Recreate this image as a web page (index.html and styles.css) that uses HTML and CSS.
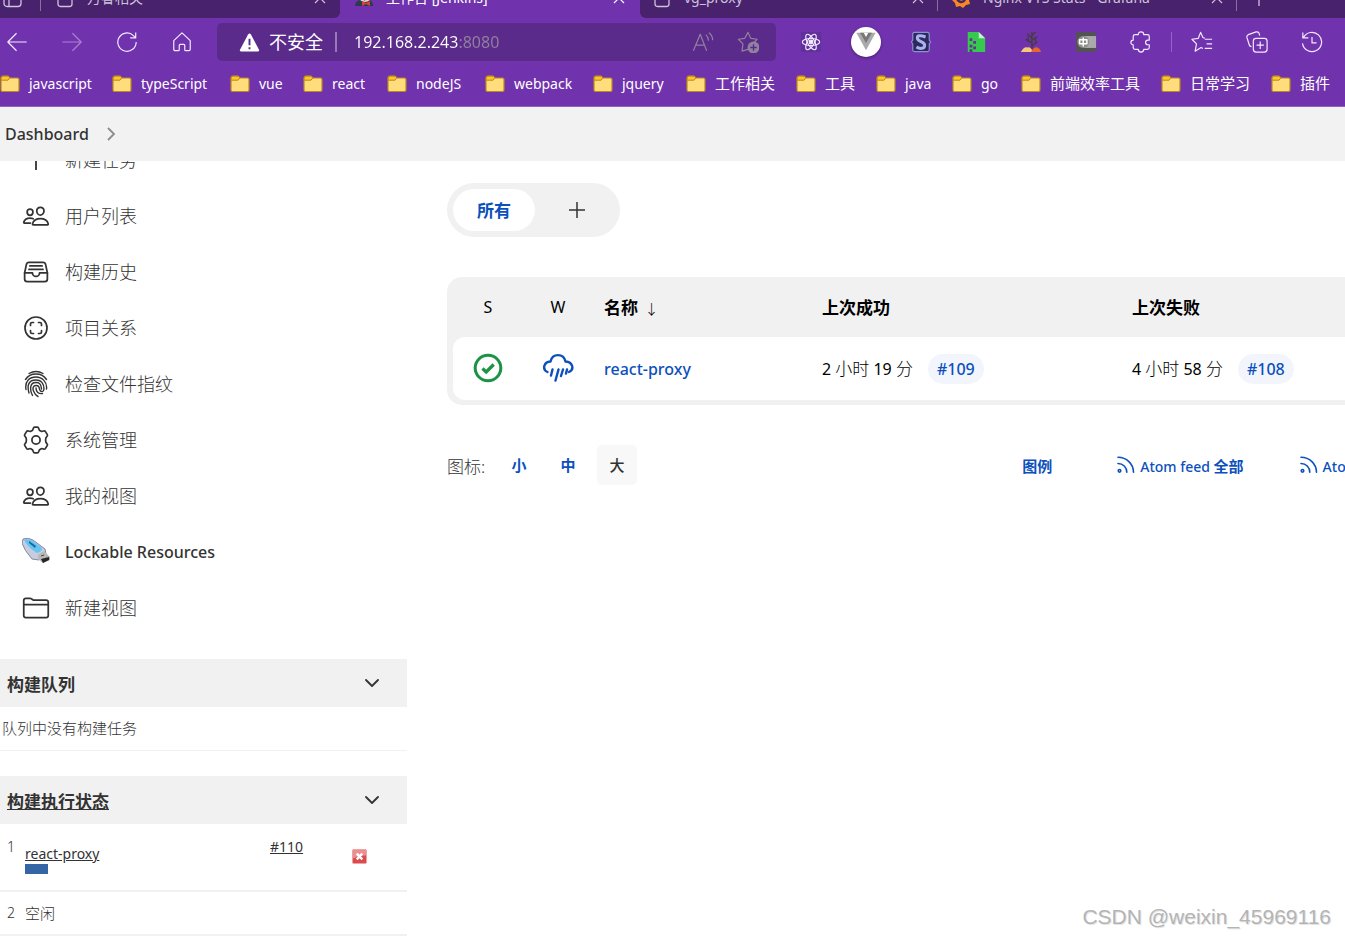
FILE: index.html
```html
<!DOCTYPE html>
<html lang="zh-CN">
<head>
<meta charset="utf-8">
<meta name="viewport" content="width=device-width, initial-scale=1">
<title>工作台 [Jenkins]</title>
<link rel="stylesheet" href="styles.css">
</head>
<body>
<svg class="sprite" aria-hidden="true">
  <symbol id="folder" viewBox="0 0 20 18">
    <path d="M1 3.500Q1 1 3 1h5l2 2h7.500q1.500 0 1.500 1.500V15q0 1.500-1.500 1.500h-15Q1 16.500 1 15z" fill="#ffdc7c" stroke="#b98a1c" stroke-width="1.200"/>
    <path d="M1.200 3.500Q1.200 1.200 3 1.200h5l1.800 1.800L8 5.200H1.200z" fill="#fdc52b" stroke="#b98a1c"/>
  </symbol>
  <symbol id="close" viewBox="0 0 12 12"><path d="M1 1l10 10M11 1L1 11" fill="none" stroke="currentColor" stroke-width="1.200"/></symbol>
  <symbol id="page" viewBox="0 0 18 20"><path d="M2 1.500h9l5 5V16q0 2.500-2.500 2.500h-9Q2 18.500 2 16z" fill="none" stroke="currentColor" stroke-width="1.300"/></symbol>
  <symbol id="people" viewBox="0 0 512 512">
    <g fill="none" stroke="currentColor" stroke-width="32" stroke-linejoin="round" stroke-linecap="round">
      <path d="M402 168c-2.930 40.670-33.100 72-66 72s-63.120-31.320-66-72c-3-42.310 26.370-72 66-72s69 30.460 66 72z"/>
      <path d="M336 304c-65.170 0-127.840 32.370-143.540 95.410-2.080 8.340 3.150 16.590 11.720 16.590h263.650c8.570 0 13.770-8.250 11.720-16.590C463.850 335.360 401.180 304 336 304z"/>
      <path d="M200 185.940c-2.340 32.480-26.720 58.060-53 58.060s-50.700-25.570-53-58.060C91.610 152.150 115.340 128 147 128s55.390 24.770 53 57.940z"/>
      <path d="M206 306c-18.050-8.270-37.930-11.450-59-11.450-52 0-102.100 25.850-114.650 76.200-1.650 6.660 2.530 13.250 9.370 13.250H154"/>
    </g>
  </symbol>
  <symbol id="chevron" viewBox="0 0 14 14"><path d="M1 4l6 6 6-6" fill="none" stroke="currentColor" stroke-width="1.800" stroke-linecap="round" stroke-linejoin="round"/></symbol>
  <symbol id="rss" viewBox="0 0 18 18"><g fill="none" stroke="currentColor" stroke-width="1.600" stroke-linecap="round"><circle cx="2.500" cy="14.800" r="1.300"/><path d="M1 7.500c5 0 8.800 3.800 8.800 8.800M1 1.300c8.500 0 15.500 6.500 15.500 15"/></g></symbol>
</svg>

<header class="browser">
  <div class="tabs">
    <div class="tab tab-first">
      <svg class="tab-icon" viewBox="0 0 20 20"><g fill="none" stroke="currentColor" stroke-width="1.300"><rect x="2" y="1.500" width="17" height="17" rx="3"/><path d="M7 6v12.500M2 6h17"/></g></svg>
      <span class="tab-rule"></span>
      <svg class="tab-icon"><use href="#page"/></svg>
      <span class="tab-title">万睿相关</span>
      <button class="tab-close" aria-label="关闭"><svg><use href="#close"/></svg></button>
    </div>
    <div class="tab tab-active">
      <svg class="tab-icon" viewBox="0 0 20 20"><path d="M1 18c0-4 3-6 6-6h7c3 0 5 2 5 6z" fill="#2d3b52"/><circle cx="11" cy="7" r="7" fill="#ead5c4"/><path d="M4 9Q3 0 11 0t7 6q-5-2-9-1l-2 5z" fill="#312b2b"/><path d="M8 13l4 2 4-2v5l-4-2-4 2z" fill="#dc4136"/><path d="M8 11q3 2 5 0" fill="none" stroke="#50382f"/></svg>
      <span class="tab-title">工作台 [Jenkins]</span>
      <button class="tab-close" aria-label="关闭"><svg><use href="#close"/></svg></button>
    </div>
    <div class="tab tab-third">
      <svg class="tab-icon"><use href="#page"/></svg>
      <span class="tab-title">vg_proxy</span>
      <button class="tab-close" aria-label="关闭"><svg><use href="#close"/></svg></button>
      <span class="tab-rule"></span>
    </div>
    <div class="tab tab-fourth">
      <svg class="tab-icon" viewBox="0 0 20 20"><path d="M10 0l3 2 4-1 0 4 3 3-2 4 1 4-4 1-3 3-3-2-4 1-1-4-3-3 2-4-1-4 4-1z" fill="#f58a21"/><path d="M14 11a4 4 0 1 1-3-5" fill="none" stroke="#48226c" stroke-width="2.500"/></svg>
      <span class="tab-title">Nginx VTS Stats - Grafana</span>
      <button class="tab-close" aria-label="关闭"><svg><use href="#close"/></svg></button>
      <span class="tab-rule"></span>
    </div>
    <button class="tab-new" aria-label="新建标签页"><svg viewBox="0 0 16 16"><path d="M8 0v16M0 8h16" stroke="currentColor" stroke-width="1.300"/></svg></button>
  </div>

  <div class="toolbar">
    <div class="tools">
      <button class="tool" aria-label="后退"><svg viewBox="0 0 24 24"><path d="M22.500 12H2M11.500 2.500L2 12l9.500 9.500"/></svg></button>
      <button class="tool tool-dim" aria-label="前进"><svg viewBox="0 0 24 24"><path d="M1.500 12H22M12.500 2.500L22 12l-9.500 9.500"/></svg></button>
      <button class="tool" aria-label="刷新"><svg viewBox="0 0 24 24"><path d="M22 12A10 10 0 1 1 19 5l2.500 2.500M21.500 1.500v6h-6"/></svg></button>
      <button class="tool" aria-label="主页"><svg viewBox="0 0 24 24"><path d="M3 10.500L12 2l9 8.500v9.500q0 1.500-1.500 1.500h-3.500q-1 0-1-1v-5q0-1-1-1h-4q-1 0-1 1v5q0 1-1 1H4.500q-1.500 0-1.500-1.500z"/></svg></button>
    </div>
    <div class="address">
      <svg class="warning" viewBox="0 0 22 20"><path d="M9.500 1.500q1.500-2 3 0l8.500 16q.5 2-1.500 2h-17q-2 0-1.500-2z" fill="#fff"/><path d="M11 6v7M11 15v2" stroke="#5a2b8a" stroke-width="2"/></svg>
      <label class="address-label" for="url">不安全</label>
      <span class="address-rule"></span>
      <input class="url" id="url" type="text" value="192.168.2.243:8080">
      <button class="tool tool-grey" aria-label="朗读"><svg viewBox="0 0 24 24"><path d="M1.500 21.500L9 3.500l7 18M4 15.500h9.500M15 4q3 2.500 3 6.500M18.500 2q4 3 4 8"/></svg></button>
      <button class="tool tool-grey" aria-label="收藏"><svg viewBox="0 0 24 24"><path d="M12 20l-6.500 2 1-8L1.500 9l7-1L12 1.500l3 6.500 7 1-3 3"/><circle cx="18" cy="18" r="6.500" fill="#92809f" stroke="none"/><path d="M18 14.500v7M14.500 18h7" stroke="#5a2b8a" stroke-width="1.500"/></svg></button>
    </div>
    <div class="tools">
      <button class="tool" aria-label="React"><svg viewBox="0 0 24 24"><rect width="22" height="22" x="1" y="1" fill="#61309b" stroke="none"/><circle cx="12" cy="12" r="2" fill="currentColor"/><ellipse cx="12" cy="12" rx="9.500" ry="3.800"/><ellipse cx="12" cy="12" rx="9.500" ry="3.800" transform="rotate(60 12 12)"/><ellipse cx="12" cy="12" rx="9.500" ry="3.800" transform="rotate(120 12 12)"/></svg></button>
      <button class="tool tool-vue" aria-label="Vue"><svg viewBox="0 0 24 24"><path d="M1.500 2h21L12 21z" fill="#aaa" stroke="none"/><path d="M5.500 2h13L12 13z" fill="#777" stroke="none"/><path d="M9.500 2h5L12 6.500z" fill="#fff" stroke="none"/></svg></button>
      <button class="tool" aria-label="Stylus"><svg viewBox="0 0 24 24"><path d="M5 1.500h14q2 0 2 2v6.500l1.500 2-1.500 2v6.500q0 2-2 2H5q-2 0-2-2V14l-1.500-2L3 10V3.500q0-2 2-2z" fill="#30275f" stroke="#8c91d4"/><path d="M17 6.500q-9-3-9 1C8 12 16 11 16 15.500S10 19.500 7 17.500" stroke="#a8b4ed" stroke-width="3.300"/></svg></button>
      <button class="tool" aria-label="压缩文件"><svg viewBox="0 0 24 24"><path d="M3 1h12l7 7v15H3z" fill="#37c84f" stroke="none"/><path d="M15 1l7 7h-7z" fill="#c9f0d0" stroke="none"/><path d="M5 8h3v3H5zM9 11h3v3H9zM5 15h3v3H5zM9 17h3v3H9zM5 20h3v3H5z" fill="#65318f" stroke="none"/></svg></button>
      <button class="tool" aria-label="植物"><svg viewBox="0 0 24 24"><path d="M13 19V1M13 16l6-4M13 13L6 9M13 10l6-4M13 8L8 3M9 11V6M17 13V8M13 5l4-4" stroke="#473b45" stroke-width="1.600"/><path d="M1 23q3-6 7-5 4-1 6 5z" fill="#f6c87c" stroke="none"/><path d="M12 23q3-6 7-5 3 1 4 5z" fill="#eb6726" stroke="none"/></svg></button>
      <button class="tool" aria-label="翻译"><svg viewBox="0 0 24 24"><rect x="1" y="1" width="22" height="22" rx="3" fill="#535353" stroke="none"/><path d="M9 5.500h14v13H9z" fill="#aaa" stroke="none"/><circle cx="9" cy="12" r="6.500" fill="#8e8e8e" stroke="none"/><path d="M5 9.500h8v4.500H5zM9 7v10" stroke="#fff" stroke-width="1.600"/></svg></button>
      <button class="tool" aria-label="扩展"><svg viewBox="0 0 24 24"><path d="M5.500 4h3.500q0-3 3-3t3 3h4q2 0 2 2v4h-1.500q-2.500 0-2.500 2.500t2.500 2.500h1.500v3q0 2-2 2h-4q0 3-3 3t-3-3H5.500q-2 0-2-2v-3q-2.500 0-2.500-2.500T3.500 10V6q0-2 2-2z"/></svg></button>
    </div>
    <span class="toolbar-rule"></span>
    <div class="tools">
      <button class="tool" aria-label="收藏夹"><svg viewBox="0 0 24 24"><path d="M15 9h8M17 14h6M15 19h8M15 8l-2-1L10.500 1.500 8 8l-7 1 5 5-1.500 8L11 18l2 1"/></svg></button>
      <button class="tool" aria-label="集锦"><svg viewBox="0 0 24 24"><rect x="8" y="8" width="15" height="15" rx="3"/><path d="M15.500 11.500v8M11.500 15.500h8M6 17q-2 0-2.500-2L1 7q-.5-2 1.500-3L11 1q2-.5 3 1l1 3"/></svg></button>
      <button class="tool" aria-label="历史记录"><svg viewBox="0 0 24 24"><path d="M2 1.500v6h6M2.500 7.500a10.500 10.500 0 1 1-.9 6M12 6.500v6.500h5"/></svg></button>
    </div>
  </div>

  <nav class="bookmarks">
    <a href="#"><svg><use href="#folder"/></svg>javascript</a>
    <a href="#"><svg><use href="#folder"/></svg>typeScript</a>
    <a href="#"><svg><use href="#folder"/></svg>vue</a>
    <a href="#"><svg><use href="#folder"/></svg>react</a>
    <a href="#"><svg><use href="#folder"/></svg>nodeJS</a>
    <a href="#"><svg><use href="#folder"/></svg>webpack</a>
    <a href="#"><svg><use href="#folder"/></svg>jquery</a>
    <a href="#"><svg><use href="#folder"/></svg><span class="zh">工作相关</span></a>
    <a href="#"><svg><use href="#folder"/></svg><span class="zh">工具</span></a>
    <a href="#"><svg><use href="#folder"/></svg>java</a>
    <a href="#"><svg><use href="#folder"/></svg>go</a>
    <a href="#"><svg><use href="#folder"/></svg><span class="zh">前端效率工具</span></a>
    <a href="#"><svg><use href="#folder"/></svg><span class="zh">日常学习</span></a>
    <a href="#"><svg><use href="#folder"/></svg><span class="zh">插件</span></a>
  </nav>
</header>

<nav class="breadcrumb">
  <a href="#">Dashboard</a>
  <svg viewBox="0 0 14 14"><path d="M4 1l6 6-6 6" fill="none" stroke="#8c8c8c" stroke-width="1.800"/></svg>
</nav>

<div class="page">
  <aside class="side">
    <nav class="tasks">
      <a href="#"><svg viewBox="0 0 28 28"><path d="M14 4v20M4 14h20" stroke="currentColor" stroke-width="1.800"/></svg><span>新建任务</span></a>
      <a href="#"><svg><use href="#people"/></svg><span>用户列表</span></a>
      <a href="#"><svg viewBox="0 0 512 512"><g fill="none" stroke="currentColor" stroke-width="32" stroke-linecap="round" stroke-linejoin="round"><path d="M384 80H128c-26 0-43 14-48 40L48 272v112a48 48 0 0048 48h320a48 48 0 0048-48V272l-32-152c-5-27-23-40-48-40z"/><path d="M48 272h144M320 272h144M192 272a64 64 0 00128 0M144 144h224M128 208h256"/></g></svg><span>构建历史</span></a>
      <a href="#"><svg viewBox="0 0 28 28"><g fill="none" stroke="currentColor" stroke-width="1.700" stroke-linecap="round" stroke-linejoin="round"><circle cx="14" cy="14" r="11"/><path d="M8.500 11.500V10q0-1.500 1.500-1.500h1.500M16.500 8.500H18q1.500 0 1.500 1.500v1.500M19.500 16.500V18q0 1.500-1.500 1.500h-1.500M11.500 19.500H10q-1.500 0-1.500-1.500v-1.500"/></g></svg><span>项目关系</span></a>
      <a href="#"><svg viewBox="0 0 28 28"><g fill="none" stroke="currentColor" stroke-width="1.400" stroke-linecap="round"><path d="M7 3.500Q14-.5 21 3.500M3.500 9.500Q7 4 14 4t10.500 5.500M4 19.500C2.500 11 8 7 14 7s11.500 5 10.500 12M7 23C5 16 6 10 14 10c6 0 8.500 5 7.800 10-.3 2-3.300 2-4 0-.7-3-.8-4.500-3.800-4.500s-3.500 3-2.500 5.500q1.500 4 4.500 5.500M10.500 25.500C8 21 7 12.500 14 12.500c5.500 0 5 4 5.500 6.500M14 18c0 4 2.500 6 6.500 5.500"/></g></svg><span>检查文件指纹</span></a>
      <a href="#"><svg viewBox="0 0 24 24"><g fill="none" stroke="currentColor" stroke-width="1.500" stroke-linejoin="round"><path d="M9.700 2q.2-1 1.200-1h2.200q1 0 1.200 1 .3 2 2 2.400 .8.500 2.200-.1 1-.4 1.600.5l1.500 2.400q.6 1-.2 1.700-1.200 1-1.200 3.100t1.200 3.100q.8.700.2 1.700l-1.500 2.400q-.6.900-1.600.5-1.400-.6-2.200-.1-1.700.5-2 2.400-.2 1-1.200 1h-2.200q-1 0-1.200-1-.3-1.900-2-2.400-.8-.5-2.200.1-1 .4-1.600-.5l-1.500-2.400q-.6-1 .2-1.700 1.200-1 1.200-3.100T2.600 8.900q-.8-.7-.2-1.700l1.500-2.400q.6-.9 1.600-.5 1.400.6 2.200.1 1.700-.4 2-2.400z"/><circle cx="12" cy="12" r="3.500"/></g></svg><span>系统管理</span></a>
      <a href="#"><svg><use href="#people"/></svg><span>我的视图</span></a>
      <a href="#" class="latin"><svg viewBox="0 0 28 28"><path d="M1 1q5-2 10 1l12 9 1 5-7 6-7-1Q2 12 0 5z" fill="#c9ccda" stroke="#8588a8"/><path d="M2 1.500q5-1 9 1.500l9 7q0 4-5 5Q5 9 2 1.500z" fill="#64c4f4"/><path d="M7 3l7 5-1 2-6-5z" fill="#17699c"/><path d="M16 17l6-4 6 6v3l-7 3-5-4z" fill="#b8b8b8"/><path d="M19 21l8-2v3l-6 3z" fill="#252525"/><path d="M19 18l3-1" stroke="#444"/></svg>Lockable Resources</a>
      <a href="#"><svg viewBox="0 0 512 512"><path d="M440 432H72a40 40 0 01-40-40V120a40 40 0 0140-40h76a40 40 0 0122 7l28 18a40 40 0 0022 7h220a40 40 0 0140 40v240a40 40 0 01-40 40zM32 192h448" fill="none" stroke="currentColor" stroke-width="32" stroke-linejoin="round"/></svg><span>新建视图</span></a>
    </nav>

    <section class="pane">
      <h2 class="pane-head"><span>构建队列</span><button aria-label="折叠"><svg><use href="#chevron"/></svg></button></h2>
      <p class="queue-empty">队列中没有构建任务</p>
    </section>

    <section class="pane">
      <h2 class="pane-head"><a href="#">构建执行状态</a><button aria-label="折叠"><svg><use href="#chevron"/></svg></button></h2>
      <table class="executors">
        <tr class="busy">
          <td class="num">1</td>
          <td class="job"><a href="#">react-proxy</a><div class="progress"><div class="progress-done" style="width:24%"></div></div></td>
          <td class="build"><a href="#">#110</a></td>
          <td class="stop"><button aria-label="终止"><svg viewBox="0 0 16 16"><rect x=".5" y=".5" width="15" height="15" rx="1.500" fill="#db4b4e" stroke="#efa2a2"/><path d="M1 1h14v6Q8 6 1 10z" fill="#ec8f90"/><path d="M5 5l6 6M11 5l-6 6" stroke="#fff" stroke-width="2.500"/></svg></button></td>
        </tr>
        <tr class="idle">
          <td class="num">2</td>
          <td class="job" colspan="3">空闲</td>
        </tr>
      </table>
    </section>
  </aside>

  <main class="main">
    <div class="views">
      <a class="view view-active" href="#">所有</a>
      <a class="view view-add" href="#" aria-label="新建视图"><svg viewBox="0 0 16 16"><path d="M8 0v16M0 8h16" stroke="currentColor" stroke-width="1.500"/></svg></a>
    </div>

    <div class="jobs-wrap">
      <table class="jobs">
        <thead>
          <tr><th class="c-icon">S</th><th class="c-icon">W</th><th class="c-name">名称 <span class="sort">↓</span></th><th class="c-time">上次成功</th><th>上次失败</th></tr>
        </thead>
        <tbody>
          <tr>
            <td class="c-icon"><svg viewBox="0 0 32 32"><g fill="none" stroke="#1b9345"><circle cx="16" cy="16" r="12.800" stroke-width="3"/><path d="M10.500 16.500l3.700 3.500 7.500-7.500" stroke-width="3.300"/></g></svg></td>
            <td class="c-icon"><svg viewBox="0 0 32 32"><g fill="none" stroke="#0b50bd" stroke-width="2.400" stroke-linecap="round" stroke-linejoin="round"><path d="M5.500 20C0 17.500 1.500 10 8.500 9.500 10.500 1 21.500 1 23.500 9.500c7.500.5 9 8 3.500 10.500M10.500 17.500l-1.500 6M16.500 17.500l-3 11M21 17.500l-2 6.500M25 17.500l-1 4"/></g></svg></td>
            <td class="c-name"><a href="#">react-proxy</a></td>
            <td>2 <span class="zh">小时</span> 19 <span class="zh">分</span><a class="badge" href="#">#109</a></td>
            <td>4 <span class="zh">小时</span> 58 <span class="zh">分</span><a class="badge" href="#">#108</a></td>
          </tr>
        </tbody>
      </table>
    </div>

    <div class="legend">
      <span class="legend-label">图标:</span>
      <div class="sizes"><a href="#">小</a><a href="#">中</a><span class="size-on">大</span></div>
      <div class="feeds">
        <a class="feed-legend" href="#">图例</a>
        <a href="#"><svg><use href="#rss"/></svg><span>Atom feed <b>全部</b></span></a>
        <a href="#"><svg><use href="#rss"/></svg><span>Atom feed <b>失败</b></span></a>
      </div>
    </div>
  </main>
</div>
<div class="watermark">CSDN @weixin_45969116</div>
</body>
</html>
```
FILE: styles.css
```css
* { box-sizing: border-box; }

body {
  margin: 0;
  height: 100vh;
  overflow: hidden;
  display: flex;
  flex-direction: column;
  position: relative;
  background: #fff;
  color: #333;
  font-family: "Noto Sans", "Noto Sans CJK SC", sans-serif;
  font-size: 16px;
}

button {
  padding: 0;
  border: 0;
  background: none;
  color: inherit;
  font: inherit;
}

a { color: inherit; text-decoration: none; }
svg { display: block; flex: none; }
.sprite { position: absolute; width: 0; height: 0; }

/* Browser chrome */
.browser {
  flex: none;
  background: #7033ad;
  border-bottom: 1px solid #9060c4;
  color: #fff;
}

/* Only the lower part of the tabs is in view */
.tabs {
  display: grid;
  grid-template-columns: 340fr 300fr 298fr 299fr 108fr;
  align-content: end;
  height: 18px;
  overflow: hidden;
  background: #7033ad;
}

.tab {
  display: flex;
  align-items: center;
  min-width: 0;
  height: 40px;
  background: #48226c;
  color: #cfc3dc;
  font-size: 14px;
}

.tab-first { padding: 0 14px 0 2px; border-radius: 0 0 6px 0; }
.tab-active { padding: 0 15px 0 14px; background: #7033ad; color: #fff; }
.tab-third { padding-left: 12px; border-radius: 0 0 0 6px; }
.tab-fourth { padding-left: 13px; }
.tab-icon { width: 20px; height: 20px; margin-right: 12px; }
.tab-title { flex: 1; padding-bottom: 2px; white-space: nowrap; }
.tab-close svg { width: 12px; height: 12px; }
.tab-rule { width: 1px; height: 26px; background: #8a709f; }
.tab-first .tab-rule { margin: 0 14px 0 6px; }
.tab-third .tab-rule, .tab-fourth .tab-rule { margin-left: 13px; }
.tab-new { height: 40px; padding-left: 14px; background: #48226c; color: #cfc3dc; }
.tab-new svg { width: 16px; height: 16px; }

.toolbar {
  display: flex;
  align-items: center;
  height: 48px;
  padding: 0 18px 0 2px;
}

.tools { display: flex; gap: 25px; }

.tool {
  display: flex;
  align-items: center;
  justify-content: center;
  width: 30px;
  height: 30px;
  color: #f3eaff;
}

.tool svg {
  width: 22px;
  height: 22px;
  fill: none;
  stroke: currentColor;
  stroke-width: 1.3;
  stroke-linejoin: round;
}

.tool-dim { color: #a981d2; }
.tool-grey { color: #92809f; }
.tool-vue { border-radius: 50%; background: #fff; box-shadow: 0 1px 3px #0006; }

.address {
  display: flex;
  align-items: center;
  flex: 1;
  height: 38px;
  margin: 0 20px;
  padding: 0 13px 0 22px;
  border-radius: 5px;
  background: #5a2b8a;
}

.warning { width: 21px; height: 19px; }
.address-label { margin-left: 9px; padding-bottom: 2px; font-size: 18px; white-space: nowrap; }
.address-rule { width: 2px; height: 20px; margin: 0 17px 0 12px; background: #987bb5; }

/* Host in white, port dimmed */
.url {
  flex: 1;
  min-width: 0;
  padding: 0;
  border: 0;
  outline: 0;
  background: linear-gradient(90deg, #fff 105px, #92809f 105px);
  background-clip: text;
  color: transparent;
  font: inherit;
}

.address .tool + .tool { margin-left: 15px; }

.toolbar-rule { width: 1px; height: 20px; margin: 0 15px; background: #9565c5; }

.bookmarks {
  display: grid;
  grid-template-columns: 112px 118px 73px 84px 98px 108px 93px 110px 80px 76px 69px 140px 110px auto;
  height: 40px;
  padding-bottom: 5px;
  font-size: 14px;
}

.bookmarks a { display: flex; align-items: center; gap: 9px; white-space: nowrap; }
.bookmarks svg { width: 20px; height: 18px; }
.bookmarks .zh { padding-bottom: 2px; font-size: 15px; }

/* Breadcrumb */
.breadcrumb {
  display: flex;
  align-items: center;
  flex: none;
  gap: 15px;
  height: 54px;
  padding-left: 5px;
  background: #f2f2f2;
  font-weight: 500;
}

.breadcrumb svg { width: 14px; height: 14px; }

/* Page body */
.page {
  display: flex;
  flex: 1;
  min-height: 0;
  overflow: hidden;
}

.side { flex: none; width: 407px; }

/* The list is scrolled part of the way under the breadcrumb */
.tasks { margin-top: -29px; font-size: 18px; font-weight: 300; }

.tasks a {
  display: flex;
  align-items: center;
  gap: 15px;
  height: 56px;
  padding-left: 22px;
}

.tasks svg { width: 28px; height: 28px; }
.tasks span { padding-bottom: 2px; }
.tasks .latin { font-size: 16px; font-weight: 500; }

.pane { margin: 23px 0 25px; font-size: 15px; }

.pane-head {
  display: flex;
  align-items: center;
  justify-content: space-between;
  height: 48px;
  margin: 0;
  padding: 0 28px 0 7px;
  background: #f1f1f1;
  font-size: 17px;
}

.pane-head svg { width: 14px; height: 14px; }
.pane-head a, .executors a { text-decoration: underline; }

.queue-empty {
  height: 44px;
  margin: 0;
  padding-left: 2px;
  border-bottom: 1px solid #f1f1f1;
  font-weight: 300;
  line-height: 43px;
}

.executors {
  width: 100%;
  border-collapse: collapse;
  table-layout: fixed;
  font-size: 14px;
}

.executors td { padding: 0; border-bottom: 2px solid #f1f1f1; vertical-align: top; line-height: 20px; }
.executors .num { width: 25px; padding-left: 7px; font-weight: 300; }
.executors .build { width: 82px; }
.executors .stop { width: 55px; }
.executors .busy td { height: 67px; padding-top: 13px; }
.executors .busy .job { padding-top: 20px; }
.executors .busy .stop { padding-top: 25px; }
.executors .idle td { height: 44px; padding-top: 11px; }
.executors .idle .job { font-size: 15px; font-weight: 300; }
.executors .stop svg { width: 15px; height: 15px; }
.progress { width: 97px; height: 10px; }
.progress-done { height: 10px; background: #3465a4; }

/* Main column runs past the right edge of the window */
.main {
  flex: 1;
  min-width: 0;
  margin: 22px -82px 0 40px;
}

.views {
  display: inline-flex;
  height: 54px;
  padding: 6px;
  border-radius: 27px;
  background: #f1f1f1;
}

.view {
  display: flex;
  align-items: center;
  justify-content: center;
  width: 82px;
  border-radius: 21px;
}

.view-active { padding-bottom: 2px; background: #fff; color: #0b50bd; font-size: 17px; font-weight: 700; }
.view-add { width: 79px; padding-left: 5px; }
.view-add svg { width: 16px; height: 16px; }

.jobs-wrap {
  margin-top: 40px;
  padding: 0 0 5px 6px;
  border-radius: 15px;
  background: #f1f1f1;
}

.jobs {
  width: 100%;
  border-spacing: 0;
  table-layout: fixed;
  color: #000;
}

.jobs th { height: 60px; padding: 0 0 2px 11px; font-size: 17px; text-align: left; }
.jobs td { height: 63px; padding: 0 0 0 11px; background: #fff; }
.jobs td:first-child { border-radius: 12px 0 0 12px; }
.jobs .c-icon { width: 70px; padding: 0; font-size: 16px; font-weight: 400; text-align: center; }
.jobs td.c-icon { padding-bottom: 2px; }
.jobs .c-icon svg { width: 32px; height: 32px; margin: 0 auto; }
.jobs .c-name { width: 218px; }
.jobs .c-time { width: 310px; }
.jobs td a { color: #0b50bd; font-weight: 500; }
.jobs .sort { margin-left: 2px; font-size: 14px; font-weight: 300; }
.jobs .zh { font-size: 17px; font-weight: 300; }

.jobs .badge {
  display: inline-block;
  margin-left: 15px;
  padding: 0 9px;
  border-radius: 15px;
  background: #f2f6fc;
  line-height: 30px;
}

.legend { display: flex; align-items: center; margin-top: 40px; font-size: 15px; }
.legend-label { width: 52px; font-size: 17px; font-weight: 300; }
.sizes { display: flex; gap: 9px; }
.sizes > * { width: 40px; line-height: 40px; text-align: center; font-weight: 700; }
.sizes a, .feeds a { color: #0b50bd; }
.sizes .size-on { border-radius: 5px; background: #f8f8f8; font-weight: 500; }

.feeds {
  display: flex;
  flex: 1;
  justify-content: flex-end;
  gap: 56px;
  padding-right: 1px;
  font-size: 14px;
  font-weight: 500;
}

.feeds a { display: flex; align-items: center; gap: 5px; white-space: nowrap; }
.feeds svg { width: 18px; height: 18px; }
.feeds b, .feed-legend { font-size: 15px; font-weight: 700; }
.feeds .feed-legend { padding-right: 9px; }

.watermark {
  position: absolute;
  right: 14px;
  bottom: 6px;
  color: #b4b4b4;
  font-family: "Liberation Sans", sans-serif;
  font-size: 21px;
  line-height: 28px;
  text-shadow: 1px 1px 0 #e4e4e4;
}
```
